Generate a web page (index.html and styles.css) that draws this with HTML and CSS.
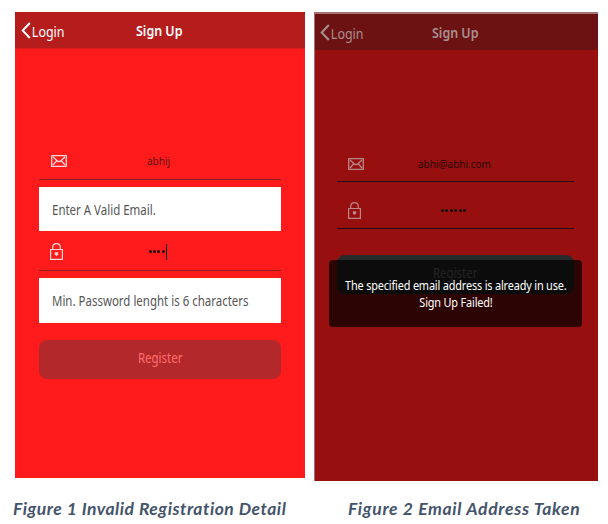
FILE: index.html
```html
<!DOCTYPE html>
<html lang="en">
<head>
<meta charset="utf-8">
<title>Sign Up</title>
<link rel="stylesheet" href="styles.css">
</head>
<body>
<svg width="0" height="0" class="defs">
  <symbol id="mail" viewBox="0 0 16 12"><path d="M.7 .7H15.3V11.3H.7ZM2 2L7 6.5H9L14 2M2 10L5.5 6M14 10L10.5 6" fill="none" stroke="currentColor" stroke-width="1.3"/></symbol>
  <symbol id="lock" viewBox="0 0 13 17"><path d="M.6 6.5H12.4V16.4H.6ZM2.7 6.5V4.5C2.7-.6 10.3-.6 10.3 4.5V6.5" fill="none" stroke="currentColor" stroke-width="1.2"/><path d="M4.8 9.3H8.2V11.3L6.5 13.2L4.8 11.3Z" fill="currentColor"/></symbol>
  <symbol id="back" viewBox="0 0 10 17"><path d="M8.8 1L1.7 8.5L8.8 16" fill="none" stroke="currentColor" stroke-width="2"/></symbol>
</svg>
<main class="figures">
  <figure class="figure first">
    <section class="phone">
      <header class="bar"><svg class="back"><use href="#back"/></svg><span class="login">Login</span><h1 class="title">Sign Up</h1></header>
      <div class="form">
        <div class="field email"><svg class="mail"><use href="#mail"/></svg><span class="value">abhij</span></div>
        <p class="error"><span>Enter A Valid Email.</span></p>
        <div class="field password"><svg class="lock"><use href="#lock"/></svg><span class="dots"><i></i><i></i><i></i><i></i><b class="caret"></b></span></div>
        <p class="error second-error"><span>Min. Password lenght is 6 characters</span></p>
        <button class="register"><span>Register</span></button>
      </div>
    </section>
    <figcaption>Figure 1 Invalid Registration Detail</figcaption>
  </figure>
  <figure class="figure second">
    <section class="phone">
      <header class="bar"><svg class="back"><use href="#back"/></svg><span class="login">Login</span><h1 class="title">Sign Up</h1></header>
      <div class="form">
        <div class="field email"><svg class="mail"><use href="#mail"/></svg><span class="value">abhi@abhi.com</span></div>
        <div class="field password"><svg class="lock"><use href="#lock"/></svg><span class="dots"><i></i><i></i><i></i><i></i><i></i><i></i></span></div>
        <button class="register"><span>Register</span></button>
      </div>
      <div class="toast"><span>The specified email address is already in use.</span><span>Sign Up Failed!</span></div>
    </section>
    <figcaption>Figure 2 Email Address Taken</figcaption>
  </figure>
</main>
</body>
</html>
```
FILE: styles.css
```css
* { box-sizing: border-box; }
body { margin: 0; background: #fff; overflow: hidden; font: 13px/18px "Noto Sans", sans-serif; }
.defs { display: block; }
.figures { display: grid; grid-template-columns: 290px 284px; gap: 9px; padding: 12px 10px 0 15px; }
.figure, .title, .error { margin: 0; }
.phone { position: relative; height: 466px; background: #ff1b1b; }
.bar { display: grid; grid-template-columns: 10px 105px 1fr; height: 37px; padding: 0 0 0 6px; align-items: center; background: #b51d1d; border-bottom: 1px solid #dc1c1c; color: #fff; }
.back { width: 10px; height: 17px; }
.login, .title, .value, .error span, .register span, .toast span { display: inline-block; transform-origin: left center; }
.login { padding-left: 1px; padding-top: 1px; font-size: 14.5px; transform: scaleX(.86); }
.title { font-size: 14px; line-height: 18px; font-weight: 600; transform: scaleX(.89); padding-top: 1px; }
.form { padding: 92px 24px 0; }
.field { display: grid; grid-template-columns: 15px 1fr; align-items: center; border-bottom: 1px solid #8c2222; color: #ffd6d6; }
.first .email { height: 39px; padding: 1px 0 0 12px; }
.mail { width: 16px; height: 12px; }
.lock { width: 13px; height: 17px; }
.value { margin-left: 81px; padding-top: 1px; color: #5c1414; font-size: 11.5px; transform: scaleX(.87); }
.error { display: flex; align-items: center; height: 44px; margin: 7px 0 0; padding: 2px 0 0 13px; background: #fff; color: #555; font-size: 13.5px; width: 242px; white-space: nowrap; }
.error span { transform: scaleX(.85); }
.first .password { height: 40px; padding: 2px 0 0 11px; }
.dots { display: flex; align-items: center; gap: 1.2px; padding-left: 84px; }
.dots i { width: 3px; height: 3px; border-radius: 50%; background: #151010; }
.caret { width: 1px; height: 16px; background: #000; }
.second-error { height: 45px; padding-top: 0; }
.register { display: block; width: 100%; height: 39px; margin-top: 17px; padding: 0 0 3px; border: 0; border-radius: 8px; background: #b3292b; color: #ff6e70; font: 13.5px/34px "Noto Sans", sans-serif; }
.register span { transform: scaleX(.85); transform-origin: center; }
figcaption { overflow: hidden; width: 273px; margin: 21px 0 0 -2px; white-space: nowrap; color: #44546a; font: italic 700 17.5px/20px Lato, sans-serif; letter-spacing: .51px; }
.second .phone { height: 469px; background: #980f10; border-top: 2px solid #a77476; border-left: 1px solid #a77476; }
.second .bar { height: 36px; padding-left: 5px; grid-template-columns: 10px 102px 1fr; background: #6d1212; border-bottom: 0; color: #a89090; }
.second .form { padding: 97px 24px 0 22px; }
.second .field { border-color: #1f1413; color: #b98788; padding-left: 11px; }
.second .email { height: 35px; }
.second .password { height: 47px; padding-top: 11px; }
.second .value { margin-left: 55px; padding-top: 0; color: #250707; }
.second .dots { padding-left: 78px; gap: 1.4px; }
.second .register { margin-top: 26px; background: #292b2b; color: #757575; }
.toast { position: absolute; left: 14px; top: 246px; display: flex; flex-direction: column; align-items: center; width: 253px; height: 67px; padding-top: 17px; border-radius: 4px; background: rgba(0,0,0,.7); color: #fff; font-size: 12.5px; line-height: 17px; white-space: nowrap; letter-spacing: -.2px; }
.toast span { transform: scaleX(.873); transform-origin: center; }
.second figcaption { margin: 18px 0 0 34px; width: 250px; letter-spacing: .68px; }
```
